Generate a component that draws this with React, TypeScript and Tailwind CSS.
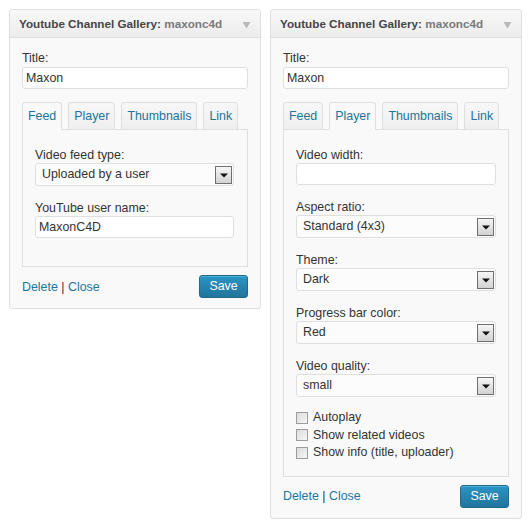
import React from "react";

const FONT = { fontFamily: '"Liberation Sans", Arial, sans-serif' };

function Header() {
  return (
    <div className="h-[28px] border-b border-[#dfdfdf] bg-gradient-to-b from-[#f9f9f9] to-[#ececec] rounded-t-[3px] flex items-center justify-between pl-[9px] pr-[9px]">
      <div className="text-[11.7px] font-bold text-[#464646] whitespace-nowrap">
        Youtube Channel Gallery: <span className="font-bold text-[#7a7a7a]">maxonc4d</span>
      </div>
      <svg width="9" height="8" viewBox="0 0 9 8" className="mt-[2px]">
        <path d="M0.5 1 L8.5 1 L4.5 7.5 Z" fill="#b9b9b9" />
      </svg>
    </div>
  );
}

function Label({ children }: { children: React.ReactNode }) {
  return <div className="h-[15px] leading-[15px] text-[12.4px] text-[#333]">{children}</div>;
}

function TextInput({ value }: { value: string }) {
  return (
    <div className="h-[22px] border border-[#dfdfdf] rounded-[3px] bg-white pl-[3px] flex items-center text-[12.4px] text-[#333]">
      {value}
    </div>
  );
}

function Select({ value }: { value: string }) {
  return (
    <div className="h-[23px] border border-[#dfdfdf] rounded-[3px] bg-[#fcfcfc] flex items-center justify-between pl-[6px] pr-[1px] text-[12.4px] text-[#333]">
      <span>{value}</span>
      <div className="w-[17px] h-[18px] mt-[1px] border border-[#6f6f6f] bg-gradient-to-b from-[#f6f6f6] to-[#d2d2d2] flex items-center justify-center">
        <svg width="8" height="5" viewBox="0 0 8 5">
          <path d="M0 0.5 L8 0.5 L4 4.5 Z" fill="#111" />
        </svg>
      </div>
    </div>
  );
}

function Tabs({ active }: { active: string }) {
  const tabs = ["Feed", "Player", "Thumbnails", "Link"];
  return (
    <div className="flex gap-[6px] relative z-10 -mb-px">
      {tabs.map((t) => (
        <div
          key={t}
          className={
            t === active
              ? "h-[28px] px-[5px] flex items-center border border-[#dfdfdf] border-b-[#f9f9f9] bg-[#f9f9f9] rounded-t-[3px] text-[12.4px] text-[#21759b]"
              : "h-[28px] px-[5px] flex items-center border border-[#dfdfdf] bg-gradient-to-b from-[#f7f7f7] to-[#efefef] rounded-t-[3px] text-[12.4px] text-[#21759b]"
          }
        >
          {t}
        </div>
      ))}
    </div>
  );
}

function Checkbox({ label }: { label: string }) {
  return (
    <div className="h-[17.5px] flex items-center gap-[5px] text-[12.4px] text-[#333]">
      <div className="w-[12px] h-[12px] border border-[#9c9c9c] bg-gradient-to-br from-[#dcdcdc] to-[#f6f6f6]" />
      <span>{label}</span>
    </div>
  );
}

function Footer() {
  return (
    <div className="mt-[8px] flex items-center justify-between">
      <div className="text-[12.4px] pt-[1px]">
        <span className="text-[#21759b]">Delete</span>
        <span className="text-[#333]"> | </span>
        <span className="text-[#21759b]">Close</span>
      </div>
      <div className="h-[23px] w-[49px] rounded-[3px] border border-[#1e6a8d] bg-gradient-to-b from-[#2a95c5] to-[#21759b] text-white text-[12.4px] flex items-center justify-center shadow-[inset_0_1px_0_rgba(120,200,230,0.5)]">
        Save
      </div>
    </div>
  );
}

function Panel({ children }: { children: React.ReactNode }) {
  return (
    <div className="w-[252px] border border-[#dfdfdf] rounded-[3px] bg-[#f9f9f9]">
      <Header />
      <div className="px-[12px] pt-[13px] pb-[10px]">
        <Label>Title:</Label>
        <div className="mt-[1px]">
          <TextInput value="Maxon" />
        </div>
        <div className="mt-[13px]">{children}</div>
      </div>
    </div>
  );
}

export default function App() {
  return (
    <div className="w-[532px] h-[531px] bg-white flex items-start gap-[9px] pl-[9px] pt-[9px]" style={FONT}>
      <Panel>
        <Tabs active="Feed" />
        <div className="border border-[#dfdfdf] bg-[#f9f9f9] pl-[12px] pr-[13px] pt-[18px] pb-[28px]">
          <Label>Video feed type:</Label>
          <Select value="Uploaded by a user" />
          <div className="mt-[15px]">
            <Label>YouTube user name:</Label>
            <TextInput value="MaxonC4D" />
          </div>
        </div>
        <Footer />
      </Panel>
      <Panel>
        <Tabs active="Player" />
        <div className="border border-[#dfdfdf] bg-[#f9f9f9] pl-[12px] pr-[12px] pt-[18px] pb-[14px]">
          <Label>Video width:</Label>
          <TextInput value="" />
          <div className="mt-[15px]">
            <Label>Aspect ratio:</Label>
            <Select value="Standard (4x3)" />
          </div>
          <div className="mt-[15px]">
            <Label>Theme:</Label>
            <Select value="Dark" />
          </div>
          <div className="mt-[15px]">
            <Label>Progress bar color:</Label>
            <Select value="Red" />
          </div>
          <div className="mt-[15px]">
            <Label>Video quality:</Label>
            <Select value="small" />
          </div>
          <div className="mt-[12px]">
            <Checkbox label="Autoplay" />
            <Checkbox label="Show related videos" />
            <Checkbox label="Show info (title, uploader)" />
          </div>
        </div>
        <Footer />
      </Panel>
    </div>
  );
}
